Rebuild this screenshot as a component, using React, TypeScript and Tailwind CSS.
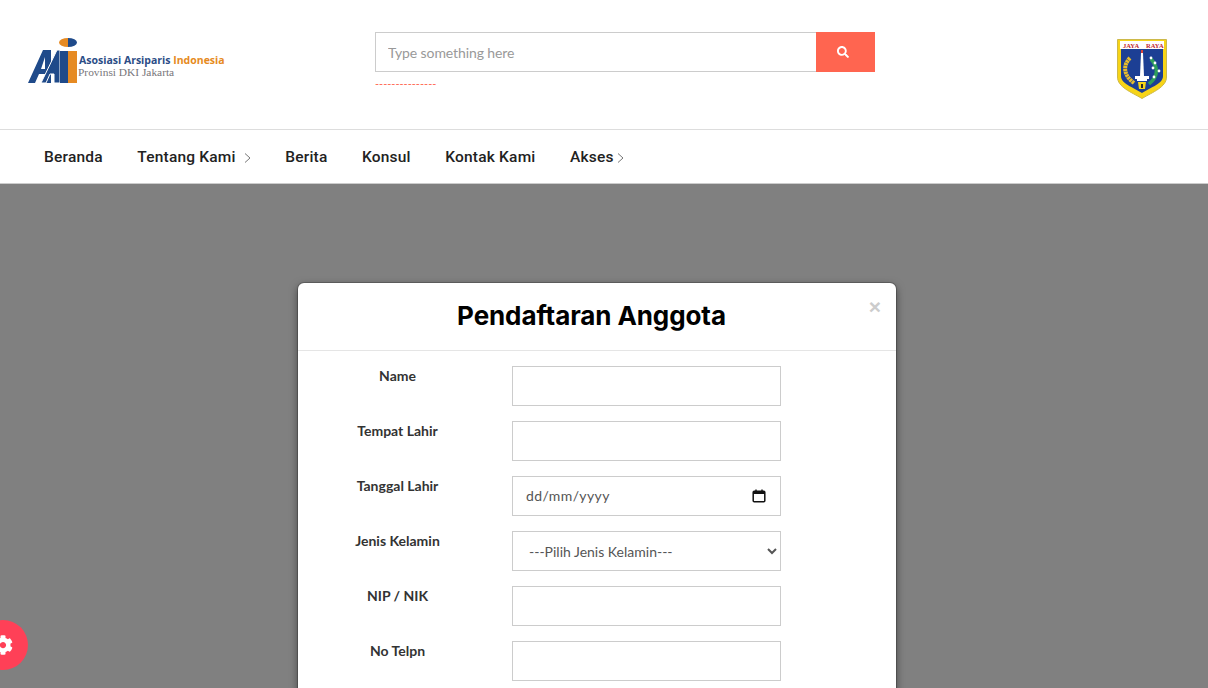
import React from "react";
import { FaCog, FaSearch } from "react-icons/fa";

const navItems = [
  { label: "Beranda", sub: false, gap: "ml-0" },
  { label: "Tentang Kami", sub: true, gap: "ml-[8px]" },
  { label: "Berita", sub: false, gap: "ml-0" },
  { label: "Konsul", sub: false, gap: "ml-0" },
  { label: "Kontak Kami", sub: false, gap: "ml-0" },
  { label: "Akses", sub: true, gap: "ml-[3px]" },
];

const fields = ["Name", "Tempat Lahir", "Tanggal Lahir", "Jenis Kelamin", "NIP / NIK", "No Telpn"];

const Logo = () => (
  <div className="flex items-center">
    <svg width="50" height="46" viewBox="0 0 50 46" className="shrink-0">
      <path d="M0 45 L15 12 H23 V45 H17 V36 H11 L7 45 Z M17 19 L13 31 H17 Z" fill="#1f4a8a" fillRule="evenodd" />
      <path d="M13 45 L29 12 H32 V45 H26 V36 H22 L18 45 Z" fill="#1f4a8a" stroke="#fff" strokeWidth="1" />
      <rect x="32" y="13" width="8" height="32" fill="#1f4a8a" />
      <rect x="40" y="13" width="9" height="32" fill="#e68a22" />
      <path d="M40 0 A9 4.5 0 0 0 40 9 Z" fill="#e68a22" />
      <path d="M40 0 A9 4.5 0 0 1 40 9 Z" fill="#1f4a8a" />
    </svg>
    <div className="ml-[1px] mt-[9px] flex flex-col">
      <div className="font-['Open_Sans',sans-serif] text-[10.5px] font-bold leading-[12px] whitespace-nowrap text-[#2b4d86]">
        Asosiasi Arsiparis <span className="text-[#e68a22]">Indonesia</span>
      </div>
      <div className="-ml-[1px] font-['Liberation_Serif',serif] text-[11.4px] leading-[12px] whitespace-nowrap text-[#77767a]">
        Provinsi DKI Jakarta
      </div>
    </div>
  </div>
);

const Emblem = () => (
  <svg width="50" height="60" viewBox="0 0 50 60">
    <path d="M0.5 0.5 H49.5 V38 C49.5 48 36 53 25 59.5 C14 53 0.5 48 0.5 38 Z" fill="#f7d417" stroke="#cdb94a" strokeWidth="1" />
    <rect x="3" y="2" width="44" height="8" fill="#fff" />
    <text x="6" y="8.5" fontSize="6.5" fontWeight="700" fontFamily="Liberation Serif, serif" fill="#c2282d">JAYA</text>
    <text x="29" y="8.5" fontSize="6.5" fontWeight="700" fontFamily="Liberation Serif, serif" fill="#c2282d">RAYA</text>
    <path d="M4 10 H46 V37 C46 45 34 48 25 54 C16 48 4 45 4 37 Z" fill="#1c3f94" />
    {/* tower */}
    <rect x="24" y="11" width="2" height="3" fill="#d8433a" />
    <path d="M24 14 H26 L27 37 H23 Z" fill="#fff" />
    <path d="M18 37 H32 V40 H30 V42 H20 V40 H18 Z" fill="#fff" />
    {/* rice */}
    <path d="M13 19 C6 26 6 36 17 44" fill="none" stroke="#e9bd2c" strokeWidth="4" strokeDasharray="2.5 0.5" />
    {/* cotton */}
    <path d="M34 20 C41 28 42 37 32 45" fill="none" stroke="#2f9e5b" strokeWidth="3.5" />
    <circle cx="34" cy="19" r="1.4" fill="#fff" />
    <circle cx="38" cy="24" r="1.4" fill="#fff" />
    <circle cx="36" cy="29" r="1.4" fill="#fff" />
    <circle cx="42" cy="32" r="1.4" fill="#fff" />
    <circle cx="37" cy="38" r="1.4" fill="#fff" />
    {/* gate */}
    <path d="M21 43 H29 L28 50 H22 Z" fill="#f7d417" />
    <path d="M24 45 H26 V49 H24 Z" fill="#2b2b2b" />
  </svg>
);

export default function App() {
  return (
    <div className="relative flex h-[688px] flex-col overflow-hidden bg-[#808080] font-['Lato',sans-serif]">
      {/* Header */}
      <header className="grid h-[130px] shrink-0 grid-cols-[375px_500px_1fr] border-b border-[#dddddd] bg-white">
        <div className="pl-[28px] pt-[38px]">
          <Logo />
        </div>
        <div className="pt-[32px]">
          <div className="flex h-[40px]">
            <input
              placeholder="Type something here"
              className="h-full min-w-0 flex-1 border border-[#cccccc] border-r-0 bg-white px-3 text-[14px] tracking-[-0.1px] outline-none placeholder:text-[#999999]"
            />
            <button className="flex w-[59px] items-center justify-center bg-[#ff6550] pr-[6px] text-white">
              <FaSearch size={12} />
            </button>
          </div>
          <div className="mt-[4px] text-[11px] leading-[16px] text-[#ff6550]">---------------</div>
        </div>
        <div className="flex justify-end pr-[41px] pt-[39px]">
          <Emblem />
        </div>
      </header>

      {/* Nav */}
      <nav className="flex h-[54px] shrink-0 items-center gap-[34.5px] border-b border-[#cccccc] bg-white pl-[44px] pt-[2px] font-['Roboto',sans-serif] text-[15.5px] font-medium tracking-[0.2px] text-[#222222]">
        {navItems.map((item) => (
          <div key={item.label} className="flex items-center">
            <span>{item.label}</span>
            {item.sub && (
              <svg width="7" height="12" viewBox="0 0 7 12" fill="none" className={item.gap}>
                <path d="M1 1.5 L6 6 L1 10.5" stroke="#777777" strokeWidth="1" />
              </svg>
            )}
          </div>
        ))}
      </nav>

      {/* Modal */}
      <div className="relative ml-[298px] mt-[99px] h-[600px] w-[598px] shrink-0 rounded-[6px] bg-white shadow-[0_3px_9px_rgba(0,0,0,0.5)] ring-1 ring-black/20">
        <div className="relative flex h-[68px] items-center justify-center border-b border-[#e5e5e5] pb-[2px] pr-[11px]">
          <h2 className="font-['Inter',sans-serif] text-[26px] font-bold tracking-[-0.1px] text-black">Pendaftaran Anggota</h2>
          <span className="absolute right-[15px] top-[12px] font-['Liberation_Sans',sans-serif] text-[21px] font-bold leading-[24px] text-[#cccccc]">×</span>
        </div>
        <div className="flex flex-col gap-[15px] pt-[15px]">
          {fields.map((label, i) => (
            <div key={label} className="flex h-[40px]">
              <label className="w-[199px] text-center text-[14px] font-bold leading-[20px] text-[#333333]">{label}</label>
              <div className="ml-[15px] h-full w-[269px]">
                {i === 2 ? (
                  <div className="flex h-full items-center justify-between border border-[#cccccc] pb-[1px] pl-[13px] pr-[14px] text-[14px] tracking-[0.4px] text-[#555555]">
                    <span>dd/mm/yyyy</span>
                    <svg width="14" height="14" viewBox="0 0 14 14" fill="none" className="mt-[1px]">
                      <rect x="1.2" y="2.2" width="11.6" height="10.6" rx="1" stroke="#111" strokeWidth="1.5" />
                      <rect x="1" y="2" width="12" height="3" fill="#111" />
                      <path d="M4 0.5V2M10 0.5V2" stroke="#111" strokeWidth="1.4" />
                    </svg>
                  </div>
                ) : i === 3 ? (
                  <select className="h-full w-full border border-[#cccccc] bg-white pl-[12px] text-[14px] text-[#555555] outline-none">
                    <option>---Pilih Jenis Kelamin---</option>
                  </select>
                ) : (
                  <input className="h-full w-full border border-[#cccccc] bg-white outline-none" />
                )}
              </div>
            </div>
          ))}
        </div>
      </div>

      {/* Settings badge */}
      <div className="absolute left-[-22px] top-[620px] flex h-[50px] w-[50px] items-center justify-center rounded-full bg-[#ff4057] text-white">
        <FaCog size={20} />
      </div>
    </div>
  );
}
